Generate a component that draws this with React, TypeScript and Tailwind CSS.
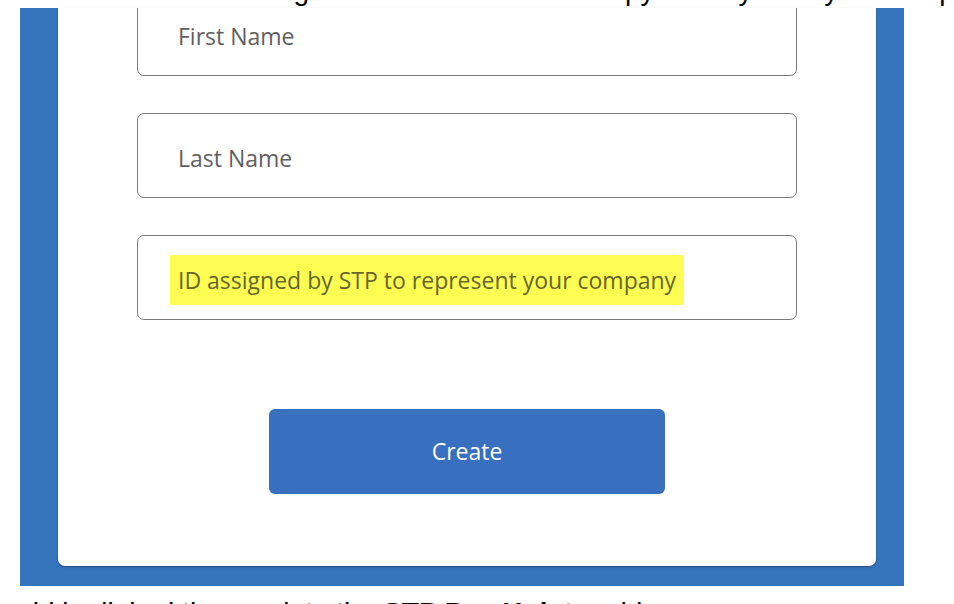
import React, { useState } from "react"

const fieldBox = "w-full h-[85px] rounded-[7px] border-[1.5px] border-[#7b7b7b] bg-white flex items-center px-[40px] pt-[5px]"

export default function App() {
    const [first, setFirst] = useState("")
    const [last, setLast] = useState("")

    return (
        <main className="w-[954px] h-[604px] overflow-hidden bg-white font-['Open_Sans',sans-serif]">
            {/* clipped line of document text above the screenshot */}
            <div className="h-2 overflow-hidden">
                <p className="mt-[-23px] pl-[60px] text-[28px] leading-[28px] whitespace-nowrap text-black font-['Liberation_Sans',sans-serif]">
                    Fill in the user using the details below then copy the key from your company setup page
                </p>
            </div>

            <section className="mx-[20px] w-[884px] h-[578px] bg-[#3474bb] pl-[38px] pr-[28px] pb-[20px]">
                <div className="h-full bg-white rounded-b-[7px] overflow-hidden shadow-[0_1px_2px_rgba(0,0,0,0.35)]">
                    <form className="mt-[-17px] flex flex-col items-center px-[79px]" onSubmit={e => e.preventDefault()}>
                        <div className={fieldBox}>
                            <input
                                className="w-full bg-transparent outline-none text-[23px] text-[#333] placeholder:text-[#5f5f5f]"
                                placeholder="First Name"
                                value={first}
                                onChange={e => setFirst(e.target.value)}
                            />
                        </div>

                        <div className={fieldBox + " mt-[37px]"}>
                            <input
                                className="w-full bg-transparent outline-none text-[23px] text-[#333] placeholder:text-[#5f5f5f]"
                                placeholder="Last Name"
                                value={last}
                                onChange={e => setLast(e.target.value)}
                            />
                        </div>

                        <div className={fieldBox + " mt-[37px]"}>
                            <span className="ml-[-8px] bg-[#fdfd52] py-[10px] pl-[8px] pr-[8px] text-[23px] leading-[30px] text-[#66662a] whitespace-nowrap">
                                ID assigned by STP to represent your company
                            </span>
                        </div>

                        <button
                            type="submit"
                            className="mt-[89px] w-[396px] h-[85px] rounded-[6px] bg-[#386fbf] text-white text-[23px]"
                        >
                            Create
                        </button>
                    </form>
                </div>
            </section>

            <div className="mt-[13px] overflow-hidden">
                <p className="ml-[-28px] text-[28px] leading-[28px] whitespace-nowrap text-black font-['Liberation_Sans',sans-serif]">
                    should be linked then go into the <b>STP Pay Hub</b> to add users
                </p>
            </div>
        </main>
    )
}
